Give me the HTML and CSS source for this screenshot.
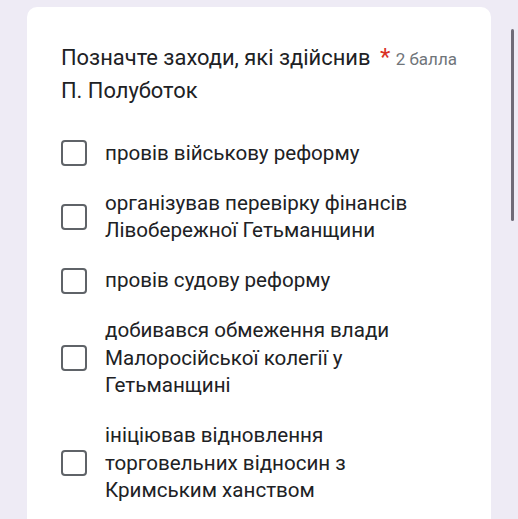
FILE: index.html
```html
<!DOCTYPE html>
<html lang="uk">
<head>
  <meta charset="UTF-8" />
  <meta name="viewport" content="width=device-width, initial-scale=1.0" />
  <title>Питання</title>
  <link rel="stylesheet" href="styles.css">
</head>
<body>
  <div class="page">
    <div class="card">
      <div class="question">
        Позначте заходи, які здійснив <span class="req">*</span> <span class="points">2 балла</span><br>
        П. Полуботок
      </div>
      <div class="options">
        <label class="option"><span class="box"></span><span class="text">провів військову реформу</span></label>
        <label class="option"><span class="box"></span><span class="text">організував перевірку фінансів Лівобережної Гетьманщини</span></label>
        <label class="option"><span class="box"></span><span class="text">провів судову реформу</span></label>
        <label class="option"><span class="box"></span><span class="text">добивався обмеження влади Малоросійської колегії у Гетьманщині</span></label>
        <label class="option"><span class="box"></span><span class="text">ініціював відновлення торговельних відносин з Кримським ханством</span></label>
      </div>
    </div>
    <div class="scroll">
      <div class="thumb"></div>
    </div>
  </div>
</body>
</html>
```

FILE: styles.css
```css
:root {
  --bg-color: #eeebf5;
  --card-bg: #ffffff;
  --text-color: #202124;
  --muted: #70757a;
  --box-color: #5f6368;
}
* { box-sizing: border-box; }
html, body {
  margin: 0;
  height: 100%;
  overflow: hidden;
}
body {
  font-family: Roboto, "Noto Sans", sans-serif;
  background: var(--bg-color);
  color: var(--text-color);
}
.page {
  display: flex;
  align-items: flex-start;
  padding: 7px 0 0 27px;
}
.card {
  width: 464px;
  background: var(--card-bg);
  border-radius: 10px;
  padding: 33.5px 46px 120px 34px;
}
.question {
  font-size: 21.9px;
  line-height: 33px;
  white-space: nowrap;
}
.req {
  color: #d93025;
  font-size: 24px;
  line-height: 1;
  margin-left: 4px;
}
.points {
  font-size: 17px;
  line-height: 1;
  color: var(--muted);
}
.options {
  display: flex;
  flex-direction: column;
  gap: 22.5px;
  margin-top: 33px;
}
.option {
  display: flex;
  align-items: center;
  gap: 18px;
  font-size: 20.6px;
  line-height: 27.5px;
}
.box {
  flex: none;
  width: 26px;
  height: 26px;
  border: 2.5px solid var(--box-color);
  border-radius: 4px;
}
.scroll {
  margin-left: 20px;
  padding-top: 22px;
}
.thumb {
  width: 3px;
  height: 192px;
  border-radius: 2px;
  background: #6f6b78;
}
```
